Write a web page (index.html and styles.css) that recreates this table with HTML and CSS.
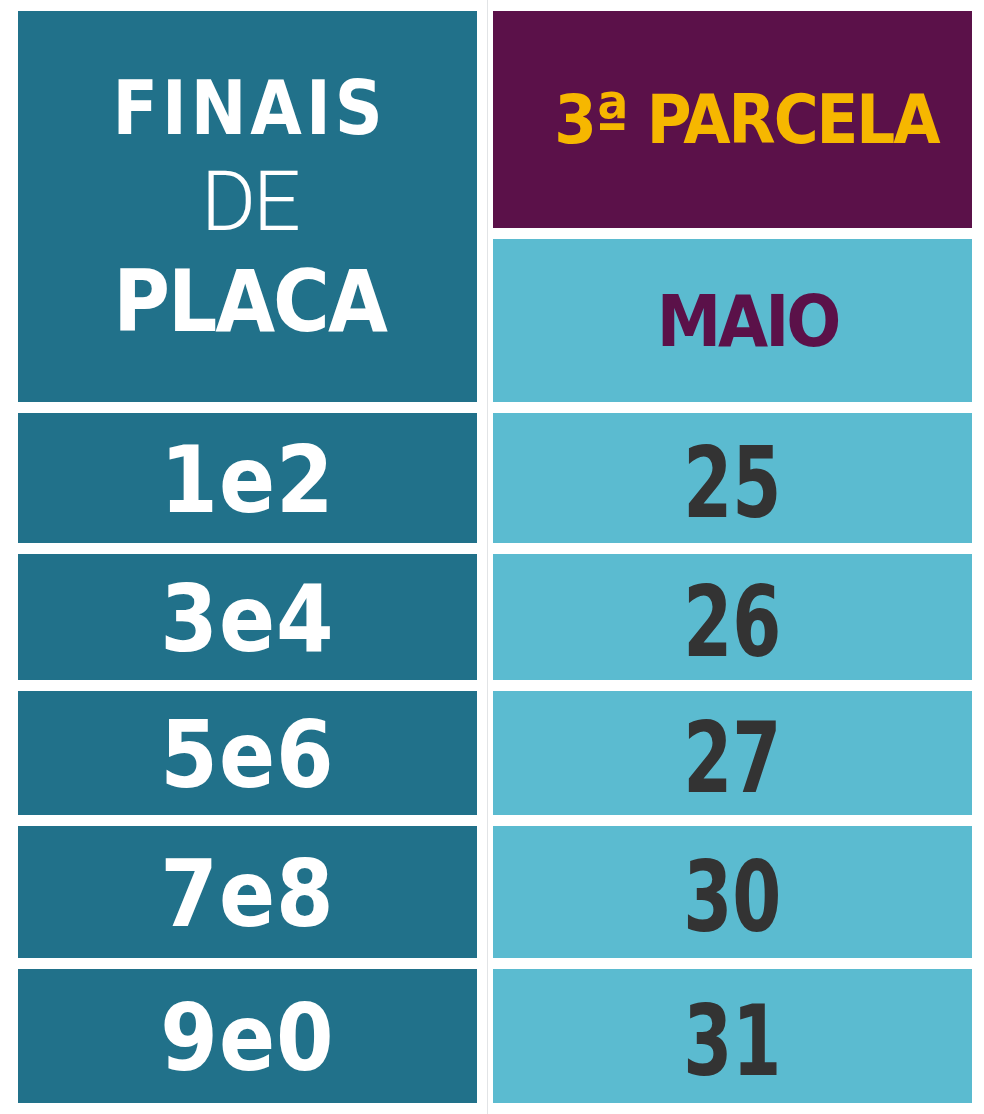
FILE: index.html
```html
<!DOCTYPE html>
<html lang="pt-BR">
<head>
<meta charset="utf-8">
<title>Finais de placa – 3ª parcela</title>
<link rel="stylesheet" href="styles.css">
</head>
<body>
<main class="table">
  <div class="cell head-left">
    <span class="hl-line hl-top">FINAIS</span>
    <span class="hl-line hl-light">DE</span>
    <span class="hl-line hl-bottom">PLACA</span>
  </div>
  <div class="divider" aria-hidden="true"></div>
  <div class="cell head-parcela"><span>3ª PARCELA</span></div>
  <div class="cell head-month"><span>MAIO</span></div>

  <div class="cell plate">1e2</div>
  <div class="cell day"><span class="num">25</span></div>
  <div class="cell plate">3e4</div>
  <div class="cell day"><span class="num">26</span></div>
  <div class="cell plate">5e6</div>
  <div class="cell day"><span class="num">27</span></div>
  <div class="cell plate">7e8</div>
  <div class="cell day"><span class="num">30</span></div>
  <div class="cell plate">9e0</div>
  <div class="cell day"><span class="num">31</span></div>
</main>
</body>
</html>
```

FILE: styles.css
```css
html, body {
  margin: 0;
  padding: 0;
  background: #ffffff;
}

body {
  width: 984px;
  height: 1114px;
  overflow: hidden;
  font-family: "DejaVu Sans Condensed", "Liberation Sans Narrow", "DejaVu Sans", sans-serif;
  font-stretch: condensed;
}

.table {
  display: grid;
  grid-template-columns: 459px 16px 479px;
  grid-template-rows: 217px 163px 130px 126px 124px 132px 134px;
  row-gap: 11px;
  padding: 11px 0 0 18px;
}

.cell {
  display: flex;
  align-items: center;
  justify-content: center;
  font-weight: 700;
  white-space: nowrap;
}

.divider {
  grid-column: 2;
  grid-row: 1 / -1;
  justify-self: start;
  width: 1px;
  margin: -11px 0 -11px 10px;
  background: #e2e4e6;
}

.head-left {
  grid-column: 1;
  grid-row: 1 / 3;
  flex-direction: column;
  justify-content: flex-start;
  background: #21718a;
  color: #ffffff;
  padding: 50px 0 0 4px;
}

.hl-line {
  display: block;
  line-height: 94px;
}

.hl-top {
  font-size: 74px;
  letter-spacing: 4px;
}

.hl-light {
  font-family: "Roboto", "Open Sans", sans-serif;
  font-weight: 300;
  font-stretch: normal;
  font-size: 84px;
  letter-spacing: -3px;
}

.hl-bottom {
  font-size: 86px;
  letter-spacing: -2px;
  margin-top: 5px;
}

.head-parcela {
  grid-column: 3;
  grid-row: 1;
  background: #5b1149;
  color: #f6b700;
  font-size: 68px;
  letter-spacing: -2px;
  padding-left: 28px;
}

.head-month {
  grid-column: 3;
  grid-row: 2;
  background: #5bbbd0;
  color: #5b1149;
  font-size: 72px;
  letter-spacing: -3px;
  padding-left: 30px;
}

.plate {
  grid-column: 1;
  background: #21718a;
  color: #ffffff;
  font-size: 92px;
  letter-spacing: 1px;
  padding-top: 4px;
}

.day {
  grid-column: 3;
  background: #5bbbd0;
  color: #333333;
  font-size: 98px;
  padding-top: 10px;
}

.num {
  display: inline-block;
  transform: scaleX(0.8);
}
```
